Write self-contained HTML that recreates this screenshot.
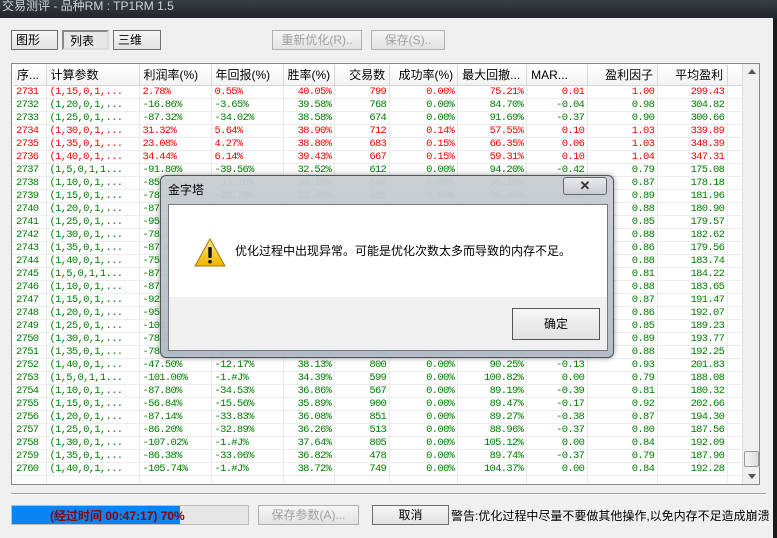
<!DOCTYPE html>
<html><head><meta charset="utf-8"><style>
*{margin:0;padding:0;box-sizing:border-box}
body{width:777px;height:538px;overflow:hidden;background:#1a1a1a;position:relative;font-family:"Liberation Sans","Noto Sans CJK SC",sans-serif;font-size:12px}
.title{position:absolute;left:0;top:0;width:777px;height:19px;background:linear-gradient(#3a3f44,#202428);color:#cfd3d6;font-size:12px;padding:0 0 0 2px;line-height:12px}
.win{position:absolute;left:0;top:18px;width:773px;height:520px;background:#f0f0f0}
.btn{position:absolute;border:1px solid #707070;background:linear-gradient(#f6f6f6,#e2e2e2);font-size:12px;text-align:center;line-height:18px;color:#000}
.dis{color:#a0a0a0;border-color:#b0b0b0}
.tbl{position:absolute;left:11px;top:63px;width:749px;height:422px;border:1px solid #828790;background:#fff;overflow:hidden}
table{border-collapse:collapse;table-layout:fixed;font-family:"Liberation Mono",monospace;font-size:10.5px;letter-spacing:-0.7px;position:absolute;left:1px;top:1px}
td{height:13px;border-right:1px solid #ececec;border-bottom:1px solid #ececec;padding:0 3px;white-space:nowrap;overflow:hidden;line-height:12px}
th{height:20px;font-family:"Liberation Sans","Noto Sans CJK SC",sans-serif;font-weight:normal;font-size:12px;letter-spacing:0;border-right:1px solid #d5d5d5;border-bottom:1px solid #d5d5d5;background:linear-gradient(#fff,#f3f3f3);padding:0 4px;text-align:left;white-space:nowrap;overflow:hidden}
.r td{color:#f00}.g td{color:#008000}
td.R,th.R{text-align:right}
.sb{position:absolute;right:0;top:0;width:17px;height:420px;background:#f0f0f0;border-left:1px solid #e0e0e0}
.dlg{position:absolute;left:160px;top:175px;width:454px;height:183px;border:1px solid #555;border-radius:6px;background:linear-gradient(rgba(200,205,210,.95),rgba(175,185,195,.95));box-shadow:0 0 6px rgba(0,0,0,.4)}
</style></head><body>
<div class="title">交易测评 - 品种RM : TP1RM 1.5</div>
<div class="win">
<div class="btn" style="left:11px;top:12px;width:47px;height:20px;text-align:left;padding-left:4px">图形</div>
<div class="btn" style="left:62px;top:12px;width:47px;height:20px;text-align:left;padding-left:6px;background:#e8e8e8;border:2px inset #ddd">列表</div>
<div class="btn" style="left:113px;top:12px;width:48px;height:20px;text-align:left;padding-left:4px">三维</div>
<div class="btn dis" style="left:272px;top:12px;width:90px;height:20px">重新优化(R)..</div>
<div class="btn dis" style="left:371px;top:12px;width:74px;height:20px">保存(S)..</div>
</div>
<div class="tbl">
<table>
<colgroup><col style="width:33px"><col style="width:93px"><col style="width:72px"><col style="width:72px"><col style="width:50px"><col style="width:55px"><col style="width:68px"><col style="width:69px"><col style="width:61px"><col style="width:70px"><col style="width:70px"><col style="width:16px"></colgroup>
<tr><th>序...</th><th>计算参数</th><th>利润率(%)</th><th>年回报(%)</th><th class="R">胜率(%)</th><th class="R">交易数</th><th class="R">成功率(%)</th><th>最大回撤...</th><th>MAR...</th><th class="R">盈利因子</th><th class="R">平均盈利</th><th></th></tr>
<tr class="r"><td>2731</td><td>(1,15,0,1,...</td><td>2.78%</td><td>0.55%</td><td class="R">40.05%</td><td class="R">799</td><td class="R">0.00%</td><td class="R">75.21%</td><td class="R">0.01</td><td class="R">1.00</td><td class="R">299.43</td><td></td></tr>
<tr class="g"><td>2732</td><td>(1,20,0,1,...</td><td>-16.86%</td><td>-3.65%</td><td class="R">39.58%</td><td class="R">768</td><td class="R">0.00%</td><td class="R">84.70%</td><td class="R">-0.04</td><td class="R">0.98</td><td class="R">304.82</td><td></td></tr>
<tr class="g"><td>2733</td><td>(1,25,0,1,...</td><td>-87.32%</td><td>-34.02%</td><td class="R">38.58%</td><td class="R">674</td><td class="R">0.00%</td><td class="R">91.69%</td><td class="R">-0.37</td><td class="R">0.90</td><td class="R">300.66</td><td></td></tr>
<tr class="r"><td>2734</td><td>(1,30,0,1,...</td><td>31.32%</td><td>5.64%</td><td class="R">38.90%</td><td class="R">712</td><td class="R">0.14%</td><td class="R">57.55%</td><td class="R">0.10</td><td class="R">1.03</td><td class="R">339.89</td><td></td></tr>
<tr class="r"><td>2735</td><td>(1,35,0,1,...</td><td>23.08%</td><td>4.27%</td><td class="R">38.80%</td><td class="R">683</td><td class="R">0.15%</td><td class="R">66.35%</td><td class="R">0.06</td><td class="R">1.03</td><td class="R">348.39</td><td></td></tr>
<tr class="r"><td>2736</td><td>(1,40,0,1,...</td><td>34.44%</td><td>6.14%</td><td class="R">39.43%</td><td class="R">667</td><td class="R">0.15%</td><td class="R">59.31%</td><td class="R">0.10</td><td class="R">1.04</td><td class="R">347.31</td><td></td></tr>
<tr class="g"><td>2737</td><td>(1,5,0,1,1...</td><td>-91.80%</td><td>-39.56%</td><td class="R">32.52%</td><td class="R">612</td><td class="R">0.00%</td><td class="R">94.20%</td><td class="R">-0.42</td><td class="R">0.79</td><td class="R">175.08</td><td></td></tr>
<tr class="g"><td>2738</td><td>(1,10,0,1,...</td><td>-85.20%</td><td>-33.10%</td><td class="R">33.10%</td><td class="R">640</td><td class="R">0.00%</td><td class="R">90.10%</td><td class="R">-0.37</td><td class="R">0.87</td><td class="R">178.18</td><td></td></tr>
<tr class="g"><td>2739</td><td>(1,15,0,1,...</td><td>-78.40%</td><td>-28.70%</td><td class="R">33.80%</td><td class="R">655</td><td class="R">0.00%</td><td class="R">86.40%</td><td class="R">-0.33</td><td class="R">0.89</td><td class="R">181.96</td><td></td></tr>
<tr class="g"><td>2740</td><td>(1,20,0,1,...</td><td>-87.10%</td><td>-33.50%</td><td class="R">34.20%</td><td class="R">620</td><td class="R">0.00%</td><td class="R">89.90%</td><td class="R">-0.37</td><td class="R">0.88</td><td class="R">180.90</td><td></td></tr>
<tr class="g"><td>2741</td><td>(1,25,0,1,...</td><td>-95.30%</td><td>-45.20%</td><td class="R">34.60%</td><td class="R">600</td><td class="R">0.00%</td><td class="R">96.10%</td><td class="R">-0.47</td><td class="R">0.85</td><td class="R">179.57</td><td></td></tr>
<tr class="g"><td>2742</td><td>(1,30,0,1,...</td><td>-78.60%</td><td>-28.90%</td><td class="R">35.10%</td><td class="R">660</td><td class="R">0.00%</td><td class="R">85.60%</td><td class="R">-0.34</td><td class="R">0.88</td><td class="R">182.62</td><td></td></tr>
<tr class="g"><td>2743</td><td>(1,35,0,1,...</td><td>-87.40%</td><td>-33.70%</td><td class="R">35.40%</td><td class="R">630</td><td class="R">0.00%</td><td class="R">89.60%</td><td class="R">-0.38</td><td class="R">0.86</td><td class="R">179.56</td><td></td></tr>
<tr class="g"><td>2744</td><td>(1,40,0,1,...</td><td>-75.90%</td><td>-27.40%</td><td class="R">35.90%</td><td class="R">670</td><td class="R">0.00%</td><td class="R">84.30%</td><td class="R">-0.33</td><td class="R">0.88</td><td class="R">183.74</td><td></td></tr>
<tr class="g"><td>2745</td><td>(1,5,0,1,1...</td><td>-87.20%</td><td>-33.60%</td><td class="R">33.70%</td><td class="R">610</td><td class="R">0.00%</td><td class="R">89.50%</td><td class="R">-0.38</td><td class="R">0.81</td><td class="R">184.22</td><td></td></tr>
<tr class="g"><td>2746</td><td>(1,10,0,1,...</td><td>-87.60%</td><td>-33.90%</td><td class="R">34.40%</td><td class="R">625</td><td class="R">0.00%</td><td class="R">89.80%</td><td class="R">-0.38</td><td class="R">0.88</td><td class="R">183.65</td><td></td></tr>
<tr class="g"><td>2747</td><td>(1,15,0,1,...</td><td>-92.10%</td><td>-40.20%</td><td class="R">35.20%</td><td class="R">640</td><td class="R">0.00%</td><td class="R">94.00%</td><td class="R">-0.43</td><td class="R">0.87</td><td class="R">191.47</td><td></td></tr>
<tr class="g"><td>2748</td><td>(1,20,0,1,...</td><td>-95.40%</td><td>-45.60%</td><td class="R">35.80%</td><td class="R">650</td><td class="R">0.00%</td><td class="R">96.30%</td><td class="R">-0.47</td><td class="R">0.86</td><td class="R">192.07</td><td></td></tr>
<tr class="g"><td>2749</td><td>(1,25,0,1,...</td><td>-101.20%</td><td>-1.#J%</td><td class="R">36.10%</td><td class="R">615</td><td class="R">0.00%</td><td class="R">100.90%</td><td class="R">0.00</td><td class="R">0.85</td><td class="R">189.23</td><td></td></tr>
<tr class="g"><td>2750</td><td>(1,30,0,1,...</td><td>-78.30%</td><td>-28.60%</td><td class="R">36.90%</td><td class="R">690</td><td class="R">0.00%</td><td class="R">85.20%</td><td class="R">-0.34</td><td class="R">0.89</td><td class="R">193.77</td><td></td></tr>
<tr class="g"><td>2751</td><td>(1,35,0,1,...</td><td>-78.90%</td><td>-29.10%</td><td class="R">37.20%</td><td class="R">700</td><td class="R">0.00%</td><td class="R">85.70%</td><td class="R">-0.34</td><td class="R">0.88</td><td class="R">192.25</td><td></td></tr>
<tr class="g"><td>2752</td><td>(1,40,0,1,...</td><td>-47.50%</td><td>-12.17%</td><td class="R">38.13%</td><td class="R">800</td><td class="R">0.00%</td><td class="R">90.25%</td><td class="R">-0.13</td><td class="R">0.93</td><td class="R">201.83</td><td></td></tr>
<tr class="g"><td>2753</td><td>(1,5,0,1,1...</td><td>-101.00%</td><td>-1.#J%</td><td class="R">34.39%</td><td class="R">599</td><td class="R">0.00%</td><td class="R">100.82%</td><td class="R">0.00</td><td class="R">0.79</td><td class="R">188.08</td><td></td></tr>
<tr class="g"><td>2754</td><td>(1,10,0,1,...</td><td>-87.80%</td><td>-34.53%</td><td class="R">36.86%</td><td class="R">567</td><td class="R">0.00%</td><td class="R">89.19%</td><td class="R">-0.39</td><td class="R">0.81</td><td class="R">180.32</td><td></td></tr>
<tr class="g"><td>2755</td><td>(1,15,0,1,...</td><td>-56.84%</td><td>-15.56%</td><td class="R">35.89%</td><td class="R">900</td><td class="R">0.00%</td><td class="R">89.47%</td><td class="R">-0.17</td><td class="R">0.92</td><td class="R">202.66</td><td></td></tr>
<tr class="g"><td>2756</td><td>(1,20,0,1,...</td><td>-87.14%</td><td>-33.83%</td><td class="R">36.08%</td><td class="R">851</td><td class="R">0.00%</td><td class="R">89.27%</td><td class="R">-0.38</td><td class="R">0.87</td><td class="R">194.30</td><td></td></tr>
<tr class="g"><td>2757</td><td>(1,25,0,1,...</td><td>-86.20%</td><td>-32.89%</td><td class="R">36.26%</td><td class="R">513</td><td class="R">0.00%</td><td class="R">88.96%</td><td class="R">-0.37</td><td class="R">0.80</td><td class="R">187.56</td><td></td></tr>
<tr class="g"><td>2758</td><td>(1,30,0,1,...</td><td>-107.02%</td><td>-1.#J%</td><td class="R">37.64%</td><td class="R">805</td><td class="R">0.00%</td><td class="R">105.12%</td><td class="R">0.00</td><td class="R">0.84</td><td class="R">192.09</td><td></td></tr>
<tr class="g"><td>2759</td><td>(1,35,0,1,...</td><td>-86.38%</td><td>-33.06%</td><td class="R">36.82%</td><td class="R">478</td><td class="R">0.00%</td><td class="R">89.74%</td><td class="R">-0.37</td><td class="R">0.79</td><td class="R">187.90</td><td></td></tr>
<tr class="g"><td>2760</td><td>(1,40,0,1,...</td><td>-105.74%</td><td>-1.#J%</td><td class="R">38.72%</td><td class="R">749</td><td class="R">0.00%</td><td class="R">104.37%</td><td class="R">0.00</td><td class="R">0.84</td><td class="R">192.28</td><td></td></tr>
<tr class="g"><td></td><td></td><td></td><td></td><td></td><td></td><td></td><td></td><td></td><td></td><td></td><td></td></tr>
</table>
<div class="sb">
<div style="position:absolute;left:5px;top:5px;width:0;height:0;border-left:4px solid transparent;border-right:4px solid transparent;border-bottom:5px solid #555"></div>
<div style="position:absolute;left:1px;top:387px;width:15px;height:16px;border:1px solid #999;border-radius:2px;background:linear-gradient(90deg,#f4f4f4,#dcdcdc)"></div>
<div style="position:absolute;left:5px;top:410px;width:0;height:0;border-left:4px solid transparent;border-right:4px solid transparent;border-top:5px solid #555"></div>
</div>
</div>
<div style="position:absolute;left:11px;top:493px;width:755px;height:2px;border-top:1px solid #a0a0a0;border-bottom:1px solid #fff"></div>
<div style="position:absolute;left:11px;top:505px;width:238px;height:20px;border:1px solid #bcbcbc;background:#e6e6e6">
<div style="position:absolute;left:0;top:0;width:168px;height:18px;background:#0a84f0"></div>
<div style="position:absolute;left:38px;top:1px;font-weight:bold;color:#8b0000;font-size:12px;white-space:nowrap">(经过时间 00:47:17) 70%</div>
</div>
<div class="btn dis" style="left:258px;top:505px;width:101px;height:20px">保存参数(A)...</div>
<div class="btn" style="left:372px;top:505px;width:77px;height:20px">取消</div>
<div style="position:absolute;left:451px;top:507px;font-size:12px;white-space:nowrap;color:#000">警告:优化过程中尽量不要做其他操作,以免内存不足造成崩溃</div>

<div class="dlg">
<div style="position:absolute;left:7px;top:5px;font-size:12px;color:#000">金字塔</div>
<div style="position:absolute;left:402px;top:1px;width:44px;height:18px;border:1px solid #666;border-radius:3px;background:linear-gradient(#e8ebee,#c8ccd0);text-align:center;font-size:13px;line-height:16px;color:#333;font-weight:bold">✕</div>
<div style="position:absolute;left:7px;top:28px;width:440px;height:147px;border:1px solid #777;background:#f0f0f0">
<div style="position:absolute;left:0;top:0;width:438px;height:92px;background:#fff"></div>
<svg style="position:absolute;left:25px;top:33px" width="32" height="30" viewBox="0 0 32 30"><defs><linearGradient id="w" x1="0" y1="0" x2="0" y2="1"><stop offset="0" stop-color="#ffe97a"/><stop offset="1" stop-color="#f0b400"/></linearGradient></defs><path d="M16 1 L31 28 L1 28 Z" fill="url(#w)" stroke="#9a7a10" stroke-linejoin="round"/><rect x="14.3" y="9" width="3.4" height="11" rx="1" fill="#111"/><rect x="14.3" y="22" width="3.4" height="3.4" rx="1" fill="#111"/></svg>
<div style="position:absolute;left:66px;top:37px;font-size:12px;color:#000;white-space:nowrap">优化过程中出现异常。可能是优化次数太多而导致的内存不足。</div>
<div class="btn" style="left:343px;top:103px;width:88px;height:32px;line-height:30px;border:1px solid #555">确定</div>
</div>
</div>
</body></html>
